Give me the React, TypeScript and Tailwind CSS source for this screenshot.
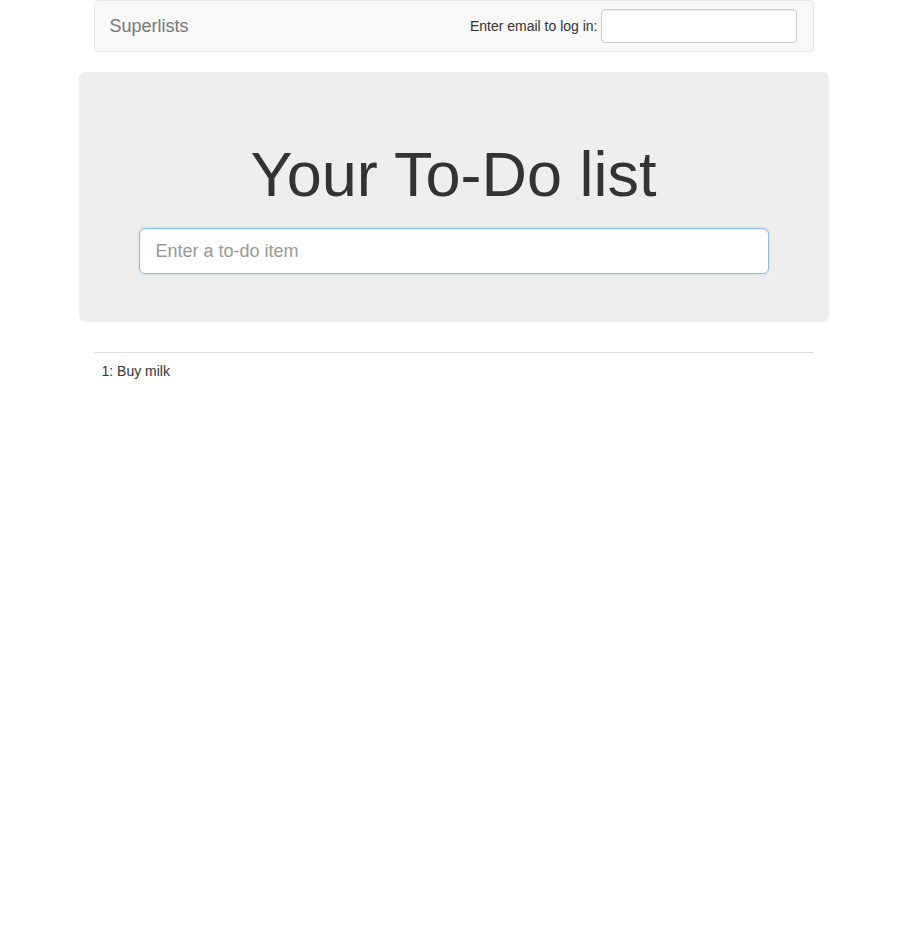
const ITEMS = ['Buy milk'];

function Navbar() {
  return (
    <nav className="mx-[15px] mb-[20px] flex h-[52px] items-start justify-between rounded-[4px] border border-[#e7e7e7] bg-[#f8f8f8]">
      <a href="#" className="block h-[50px] px-[15px] py-[15px] text-[18px] leading-[20px] text-[#777]">
        Superlists
      </a>
      <form className="mr-[16px] mt-[8px] flex items-center">
        <label className="mr-[3px] text-[14px] leading-[20px] text-[#333]">Enter email to log in:</label>
        <input
          type="text"
          className="h-[34px] w-[196px] rounded-[4px] border border-[#ccc] bg-white px-[12px] py-[6px] text-[14px] shadow-[inset_0_1px_1px_rgba(0,0,0,0.075)] outline-none"
        />
      </form>
    </nav>
  );
}

export default function App() {
  return (
    <div className="min-h-screen bg-white font-['Liberation_Sans',Arial,sans-serif] text-[14px] leading-[20px] text-[#333]">
      <div className="mx-auto w-[750px]">
        <Navbar />
        <div className="mb-[30px] rounded-[6px] bg-[#eee] px-[60px] pb-[48px] pt-[48px]">
          <h1 className="mb-[19px] mt-[20px] text-center text-[63px] font-normal leading-[1.1] text-[#333]">
            Your To-Do list
          </h1>
          <form>
            <input
              type="text"
              autoFocus
              placeholder="Enter a to-do item"
              className="block h-[46px] w-full rounded-[6px] border border-[#8dbce6] bg-white px-[16px] py-[10px] text-[18px] leading-[1.33] text-[#555] shadow-[inset_0_1px_1px_rgba(0,0,0,0.075),0_0_3px_rgba(102,175,233,0.35)] outline-none placeholder:text-[#999]"
            />
          </form>
        </div>
        <table className="mx-[15px] w-[720px] border-collapse">
          <tbody>
            {ITEMS.map((item, i) => (
              <tr key={item}>
                <td className="border-t border-[#ddd] p-[8px] align-top leading-[20px]">{`${i + 1}: ${item}`}</td>
              </tr>
            ))}
          </tbody>
        </table>
      </div>
    </div>
  );
}
